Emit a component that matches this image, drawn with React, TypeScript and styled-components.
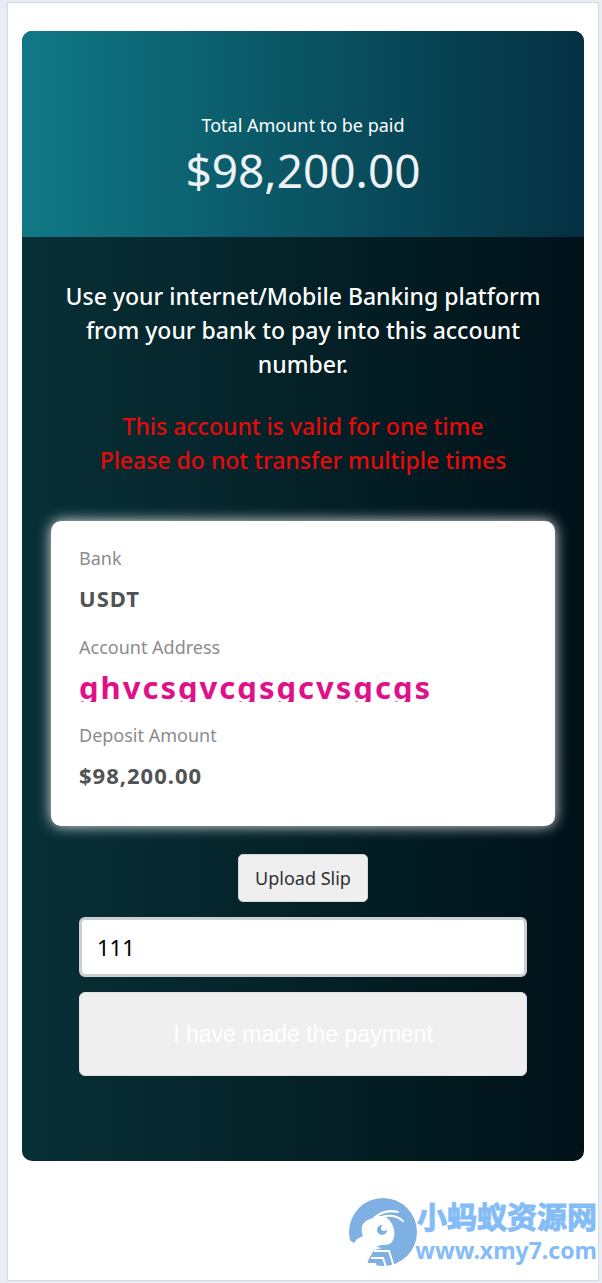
import React, { useState } from "react";
import styled, { createGlobalStyle } from "styled-components";

const GlobalStyle = createGlobalStyle`
  *, *::before, *::after { box-sizing: border-box; }
  body {
    margin: 0;
    padding: 2px 3px 2px 7px;
    background: #e8ecf5;
    font-family: "Noto Sans", "Open Sans", sans-serif;
  }
  h1, h2, p, dl, dt, dd { margin: 0; font-weight: 400; }
`;

const Page = styled.main`
  min-height: calc(100vh - 4px);
  padding: 28px 14px 0;
  border: 1px solid #d5dae3;
  background: #fff;
  display: flex;
  flex-direction: column;
`;

const Panel = styled.section`
  border-radius: 10px;
  overflow: hidden;
  background: linear-gradient(to right, #073036, #011219);
`;

const Header = styled.header`
  padding: 80px 16px 36px;
  background: linear-gradient(to right, #107885, #043042);
  text-align: center;
`;

const Caption = styled.p`
  font-size: 18px;
  line-height: 28px;
  color: #fff;
`;

const Total = styled.h1`
  font-size: 46px;
  line-height: 62px;
  color: #eef1f5;
`;

const Content = styled.div`
  padding: 42px 29px 85px;
`;

const Message = styled.p<{ $warning?: boolean }>`
  margin-bottom: ${(p) => (p.$warning ? 44 : 28)}px;
  font-size: 23px;
  line-height: 34px;
  font-weight: 500;
  text-align: center;
  color: ${(p) => (p.$warning ? "#e60a0a" : "#fff")};
`;

const Card = styled.dl`
  padding: 23px 28px 16px;
  border-radius: 10px;
  background: #fff;
  box-shadow: 0 0 14px rgba(255, 255, 255, 0.9);
`;

const Label = styled.dt`
  font-size: 18px;
  line-height: 28px;
  color: #8c8c8c;
`;

const Value = styled.dd<{ $accent?: boolean }>`
  height: ${(p) => (p.$accent ? 33 : 48)}px;
  margin: ${(p) => (p.$accent ? "8px 0 19px" : "4px 0 9px")};
  overflow: hidden;
  font-size: ${(p) => (p.$accent ? 31 : 22)}px;
  line-height: ${(p) => (p.$accent ? 36 : 44)}px;
  font-weight: 700;
  letter-spacing: ${(p) => (p.$accent ? 2 : 1)}px;
  color: ${(p) => (p.$accent ? "#e0108a" : "#505254")};
`;

const Form = styled.form`
  padding: 28px 28px 0;
  display: flex;
  flex-direction: column;
  gap: 15px;
`;

const UploadButton = styled.button`
  align-self: center;
  height: 48px;
  padding: 0 16px;
  border: 1px solid #d3d6d8;
  border-radius: 5px;
  background: #efefef;
  color: #2c2f33;
  font: 18px "Noto Sans", sans-serif;
`;

const SlipInput = styled.input`
  width: 100%;
  height: 60px;
  padding: 0 15px;
  border: 3px solid #cbcfd1;
  border-radius: 6px;
  background: #fff;
  color: #000;
  font: 22px "Noto Sans", sans-serif;
`;

const SubmitButton = styled.button`
  width: 100%;
  height: 84px;
  border: 1px solid #dfe2e3;
  border-radius: 6px;
  background: #efefef;
  color: #fff;
  font: 23px "Liberation Sans", Arial, sans-serif;
`;

const Watermark = styled.footer`
  align-self: flex-end;
  margin: auto -13px 13px 0;
  display: flex;
  align-items: center;
`;

const AntLogo = styled.svg`
  flex: none;
  width: 70px;
  height: 70px;
  margin-right: -3px;
`;

const SiteText = styled.div`
  display: flex;
  flex-direction: column;
  align-items: flex-end;
  color: #84bcf8;
  font-weight: 700;
`;

const SiteName = styled.span`
  font-family: "Noto Sans CJK SC", sans-serif;
  font-size: 30px;
  line-height: 36px;
  font-weight: 700;
  -webkit-text-stroke: 1px #84bcf8;
`;

const SiteUrl = styled.span`
  font-size: 23px;
  line-height: 34px;
`;

export default function App() {
  const [slip, setSlip] = useState("111");

  return (
    <>
      <GlobalStyle />
      <Page>
        <Panel>
          <Header>
            <Caption>Total Amount to be paid</Caption>
            <Total>$98,200.00</Total>
          </Header>
          <Content>
            <Message>
              Use your internet/Mobile Banking platform from your bank to pay
              into this account number.
            </Message>
            <Message $warning>
              This account is valid for one time
              <br />
              Please do not transfer multiple times
            </Message>
            <Card>
              <Label>Bank</Label>
              <Value>USDT</Value>
              <Label>Account Address</Label>
              <Value $accent>ghvcsgvcgsgcvsgcgs</Value>
              <Label>Deposit Amount</Label>
              <Value>$98,200.00</Value>
            </Card>
            <Form onSubmit={(e) => e.preventDefault()}>
              <UploadButton type="button">Upload Slip</UploadButton>
              <SlipInput
                aria-label="Payment reference"
                value={slip}
                onChange={(e) => setSlip(e.target.value)}
              />
              <SubmitButton type="submit">I have made the payment</SubmitButton>
            </Form>
          </Content>
        </Panel>
        <Watermark>
          <AntLogo viewBox="0 0 70 70" aria-hidden="true">
            <circle cx="35" cy="35" r="34" fill="#7fb0e4" />
            <path
              d="M0 42 L3 44 L6 46 L9 42 L15 39 C13 34 13 28 17 25 C20 22 23 22 27 20 C32 18 39 19 42 24 C46 29 48 37 45 43 C43 48 38 48 33 48 L28 50 L34 51 L26 53 L22 60 L19 66 L18 70 L0 70 Z"
              fill="#fff"
            />
            <path
              d="M26 21 C34 14 42 13 50 15 M31 21 C41 17 49 19 55 24"
              fill="none"
              stroke="#fff"
              strokeWidth="2"
              strokeLinecap="round"
            />
            <path
              d="M26 54 H41 L46 70 M23 61 L35 61 L38 70"
              fill="none"
              stroke="#fff"
              strokeWidth="2"
            />
            <path d="M19 66 L28 66 L29 70 H18 Z" fill="#fff" />
            <circle cx="34" cy="33" r="5" fill="#7fb0e4" />
            <circle cx="36" cy="31" r="3" fill="#fff" />
          </AntLogo>
          <SiteText>
            <SiteName lang="zh-CN">小蚂蚁资源网</SiteName>
            <SiteUrl>www.xmy7.com</SiteUrl>
          </SiteText>
        </Watermark>
      </Page>
    </>
  );
}
